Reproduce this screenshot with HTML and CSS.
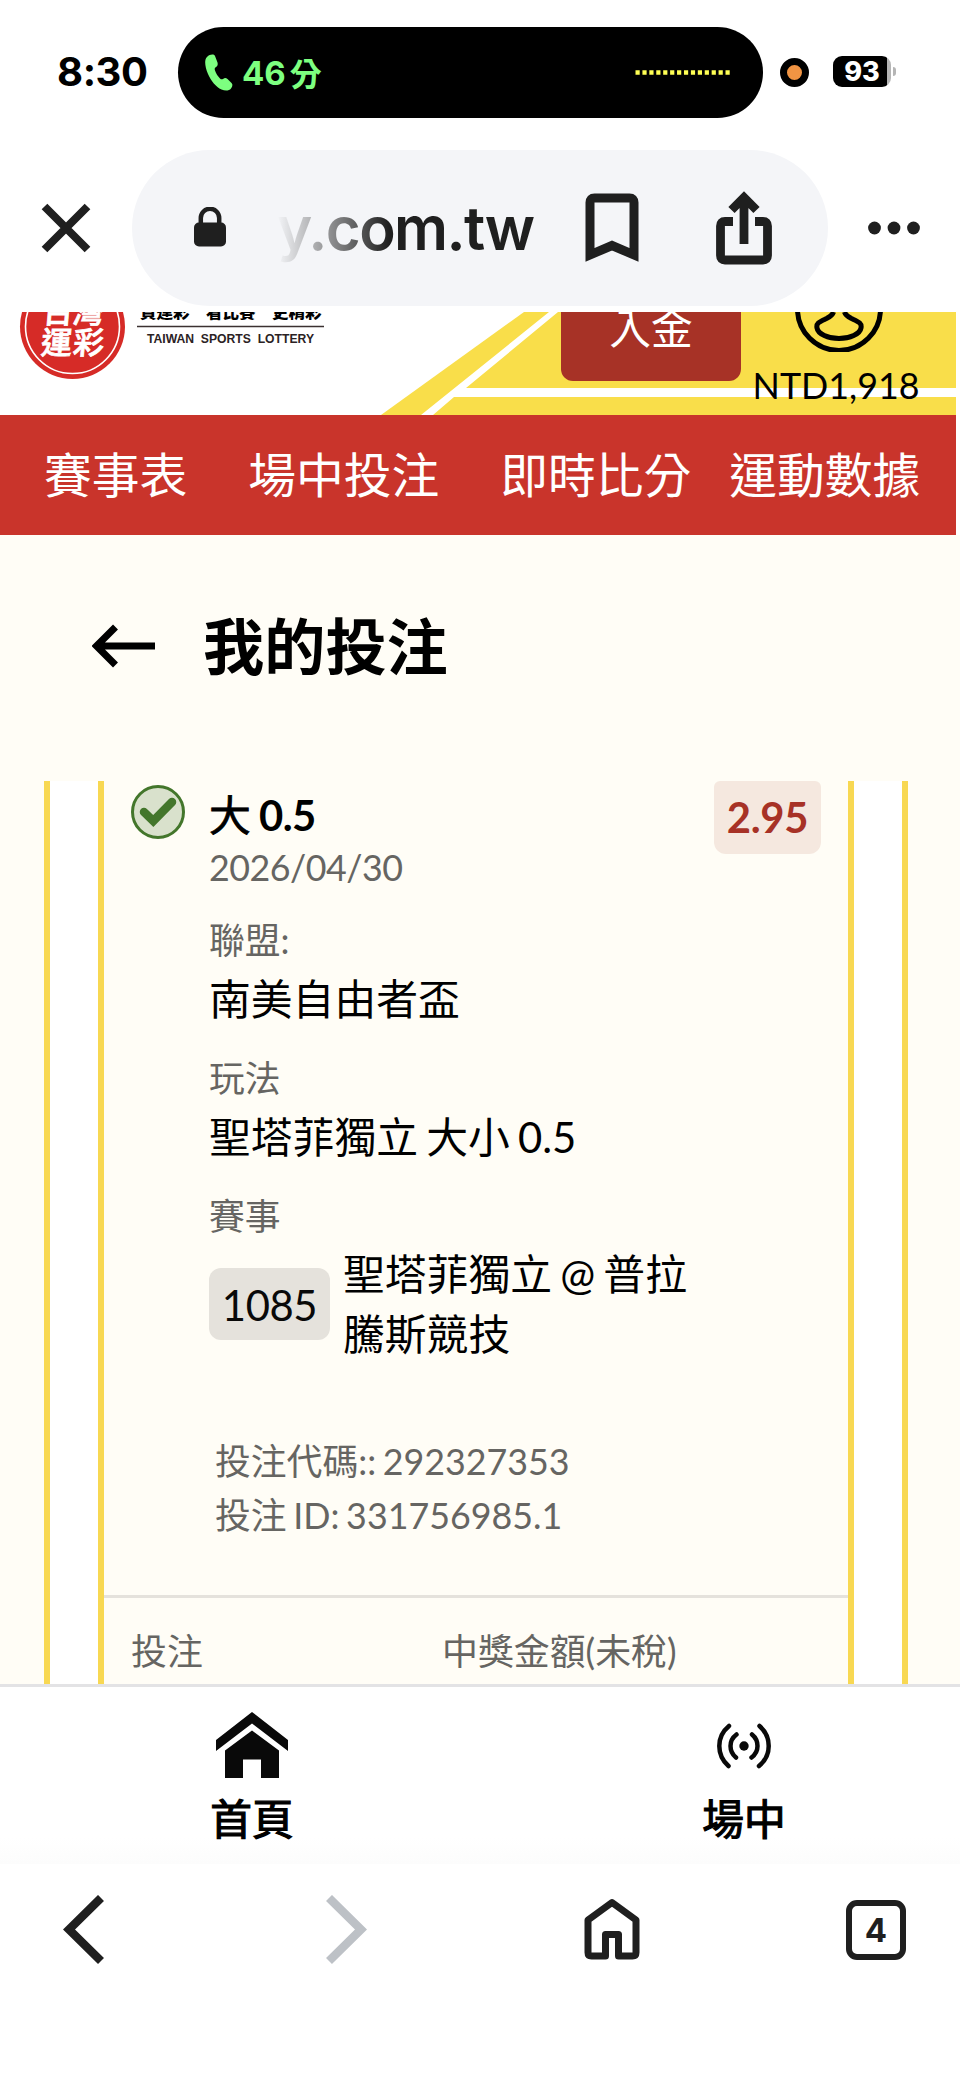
FILE: index.html
```html
<!DOCTYPE html>
<html lang="zh-Hant">
<head>
<meta charset="utf-8">
<title>我的投注</title>
<link rel="stylesheet" href="styles.css">
</head>
<body>
<div class="status">
  <div class="clock">8:30</div>
  <div class="island">
    <svg class="phone" width="28" height="38" viewBox="0 0 28 38"><path d="M2 3C5 0 9 0 10 2L12.500 8.500C13 10.500 12.500 12 11 13C9.500 14 9.500 15 10 16.500C11 19.500 13 22.500 15 24.500C16 25.500 17 25.500 18 25C20 23.500 21 24 22.500 25L26.500 29C28 30.500 27.500 32.500 26 34.500C24 37 20 37 16.500 35.500C11 33 6 27 3 20C0 13 -1 6 2 3Z" fill="#7dff80"/></svg>
    <div class="call-time"><span class="call-number">46</span><span class="call-unit">分</span></div>
    <svg class="wave" width="96" height="5" viewBox="0 0 96 5"><path d="M0.500 2.500H96" stroke="#ffff54" stroke-width="4.500" stroke-dasharray="4.200 2.723"/></svg>
  </div>
  <div class="recording"></div>
  <div class="battery"><span class="battery-level">93</span><span class="battery-nub"></span></div>
</div>

<div class="address-bar">
  <svg class="close" width="50" height="50" viewBox="0 0 50 50"><path d="M3.500 3.500L46.500 46.500M46.500 3.500L3.500 46.500" stroke="#1f1f1f" stroke-width="8"/></svg>
  <div class="address">
    <svg class="lock" width="32" height="40" viewBox="0 0 32 40"><rect y="15.500" width="32" height="24" rx="5" fill="#1f1f1f"/><path d="M6.800 18V11a9.200 9.200 0 0 1 18.400 0V18" fill="none" stroke="#1f1f1f" stroke-width="4.500"/></svg>
    <div class="host">y.com.tw</div>
    <svg class="bookmark" width="54" height="70" viewBox="0 0 54 70"><path d="M5 62V9.500Q5 5 9.500 5H44.500Q49 5 49 9.500V62L27 52.500Z" fill="none" stroke="#1f1f1f" stroke-width="9"/></svg>
    <svg class="share" width="56" height="74" viewBox="0 0 56 74"><path d="M17 30.500H9Q4.500 30.500 4.500 35V64.500Q4.500 69 9 69H47Q51.500 69 51.500 64.500V35Q51.500 30.500 47 30.500H39M28 53V8M15.500 19L28 6.500L40.500 19" fill="none" stroke="#1f1f1f" stroke-width="8.800"/></svg>
  </div>
  <svg class="more" width="52" height="14" viewBox="0 0 52 14"><g fill="#1f1f1f"><circle cx="6.500" cy="7" r="6.400"/><circle cx="26" cy="7" r="6.400"/><circle cx="45.500" cy="7" r="6.400"/></g></svg>
</div>

<header class="site-header">
  <svg class="header-stripes" width="956" height="103" viewBox="0 0 956 103"><path d="M524 0H956V103H381Z" fill="#f9de4a"/><path d="M549 0H558L466 76H956V85H454L433 103H421Z" fill="#fff"/></svg>
  <svg class="logo" width="330" height="70" viewBox="0 0 330 70">
    <circle cx="72.500" cy="14.500" r="52.500" fill="#d62b27"/>
    <circle cx="72.500" cy="14.500" r="47" fill="none" stroke="#fff" stroke-width="1.600"/>
    <g class="logo-mark" transform="skewX(-5)"><text x="43" y="10.500" textLength="61">台灣</text><text x="44" y="42" textLength="63">運彩</text></g>
    <g class="logo-slogan"><text x="140" y="6">買運彩</text><text x="206" y="6">看比賽</text><text x="272" y="6">更精彩</text></g>
    <path d="M137 14.500H324" stroke="#3b3131" stroke-width="1.300"/>
    <text class="logo-english" x="147" y="31" textLength="167" lengthAdjust="spacingAndGlyphs">TAIWAN&#160; SPORTS&#160; LOTTERY</text>
  </svg>
  <div class="deposit">入金</div>
  <div class="account">
    <svg class="avatar" width="90" height="40" viewBox="0 0 90 40"><g fill="none" stroke="#000" stroke-width="5"><circle cx="45" cy="-3" r="41.500"/><path d="M39.500 0Q38.500 3.500 32.500 6.500C25 10 22 11 23 16C24 22 34 26.500 45 26.500S66 22 67 16C68 11 65 10 57.500 6.500Q51.500 3.500 50.500 0"/></g></svg>
    <span class="balance">NTD1,918</span>
  </div>
</header>

<nav class="main-nav"><a>賽事表</a><a>場中投注</a><a>即時比分</a><a>運動數據</a></nav>

<main class="page">
  <div class="page-title">
    <svg width="64" height="44" viewBox="0 0 64 44"><path d="M63 22H5M23.500 3L4.500 22L23.500 41" fill="none" stroke="#000" stroke-width="7"/></svg>
    <h1>我的投注</h1>
  </div>
  <section class="card">
    <article class="bet">
      <div class="bet-body">
        <svg class="won" width="54" height="54" viewBox="0 0 54 54"><circle cx="27" cy="27" r="25.500" fill="#d9e1cc" stroke="#43762b" stroke-width="3"/><path d="M13 27L22.300 36L41 17" fill="none" stroke="#43762b" stroke-width="8.500" stroke-linecap="round"/></svg>
        <div class="details">
          <div class="pick"><span class="pick-side">大</span> <b>0.5</b></div>
          <div class="date">2026/04/30</div>
          <div class="label">聯盟:</div>
          <div class="value">南美自由者盃</div>
          <div class="label">玩法</div>
          <div class="value">聖塔菲獨立 大小 0.5</div>
          <div class="label">賽事</div>
          <div class="match"><span class="match-code">1085</span><span class="teams">聖塔菲獨立 @ 普拉<br>騰斯競技</span></div>
          <div class="reference"><div>投注代碼:: 292327353</div><div>投注 ID: 331756985.1</div></div>
        </div>
        <div class="odds">2.95</div>
      </div>
      <div class="totals"><span>投注</span><span>中獎金額(未稅)</span></div>
    </article>
  </section>
</main>

<nav class="tab-bar">
  <a class="tab tab-home">
    <svg width="72" height="66" viewBox="0 0 72 66"><path d="M36 0L72 28V39L36 11.500L0 39V28ZM36 18.500L63 38.500V66H45V47.500H27V66H9V38.500Z" fill="#090909"/></svg>
    <span>首頁</span>
  </a>
  <a class="tab tab-live">
    <svg width="72" height="66" viewBox="0 0 72 66"><circle cx="36" cy="34" r="4.700" fill="#090909"/><path d="M21 14Q11.300 22 11.300 34T20.500 54M51.500 14Q60.700 22 60.700 34T51 54M28.500 22.500Q22.500 27 22.500 34T28 45.500M44 22.500Q49.500 27 49.500 34T43.500 45.500" fill="none" stroke="#090909" stroke-width="4.500" stroke-linecap="round"/></svg>
    <span>場中</span>
  </a>
</nav>

<footer class="browser-bar">
  <svg class="back" width="42" height="70" viewBox="0 0 42 70"><path d="M38 3L6 34.500L38 66" fill="none" stroke="#1f1f1f" stroke-width="8.500"/></svg>
  <svg class="forward" width="42" height="70" viewBox="0 0 42 70"><path d="M4 3L36 34.500L4 66" fill="none" stroke="#bdc1c6" stroke-width="8.500"/></svg>
  <svg class="home" width="56" height="62" viewBox="0 0 56 62"><path d="M4 22L28 4.500L52 22V54.500Q52 58 48.500 58H34.500V36.500H21.500V58H7.500Q4 58 4 54.500Z" fill="none" stroke="#1f1f1f" stroke-width="7" stroke-linejoin="round"/></svg>
  <div class="tab-count">4</div>
</footer>
</body>
</html>
```
FILE: styles.css
```css
* { box-sizing: border-box; }
body { margin: 0; width: 960px; height: 2079px; overflow: hidden; background: #fff; font-family: Lato, "Noto Sans CJK TC", sans-serif; color: #000; display: flex; flex-direction: column; }
svg { display: block; flex: none; }

.status { height: 150px; flex: none; display: flex; align-items: flex-start; font-family: Inter, "Noto Sans CJK TC", sans-serif; }
.clock { width: 121px; margin: 47px 0 0 57px; font-size: 40px; line-height: 50px; font-weight: 750; letter-spacing: -0.4px; }
.island { width: 585px; height: 91px; margin-top: 27px; border-radius: 45.500px; background: #000; display: flex; align-items: center; padding: 0 32px 0 27px; color: #7dff80; }
.call-time { margin-left: 9px; display: flex; align-items: center; gap: 4px; font-size: 33px; font-weight: 700; }
.call-unit { font-size: 32px; margin-top: -2px; }
.wave { margin-left: auto; }
.recording { width: 29px; height: 29px; margin: 58px 0 0 17px; border: 7.5px solid #000; border-radius: 50%; background: #f19443; }
.battery { display: flex; align-items: center; gap: 2px; margin: 56px 0 0 24px; }
.battery-level { width: 58px; height: 31px; border-radius: 9px; background: linear-gradient(90deg, #000 54px, #b5b5b5 54px); color: #fff; font-size: 27px; line-height: 31px; font-weight: 800; text-align: center; }
.battery-nub { width: 3px; height: 9px; border-radius: 0 4px 4px 0; background: #b5b5b5; }

.address-bar { height: 162px; flex: none; display: flex; align-items: flex-start; }
.close { margin: 53px 41px 0 41px; }
.address { width: 696px; height: 156px; border-radius: 78px; background: #f4f5f8; display: flex; align-items: center; padding: 0 56px 0 62px; }
.lock { margin-top: -2px; }
.host { width: 268px; flex: none; margin-left: 51px; font: 600 60px/80px Inter, sans-serif; letter-spacing: -1.6px; white-space: nowrap; color: transparent; background: linear-gradient(90deg, #f4f5f8 0, #1f1f1f 112px); background-clip: text; }
.bookmark { margin-left: 40px; }
.share { margin-left: auto; }
.more { margin: 71px 0 0 40px; }

.site-header { position: relative; height: 103px; flex: none; overflow: hidden; display: flex; align-items: flex-start; }
.header-stripes { position: absolute; left: 0; top: 0; }
.logo { position: relative; }
.logo-mark { font: 500 31px "Noto Sans CJK TC", sans-serif; fill: #fff; stroke: #fff; stroke-width: 0.800px; }
.logo-slogan { font: 900 16.5px "Noto Sans CJK TC", sans-serif; }
.logo-english { font: 700 13px "Liberation Sans", sans-serif; fill: #2b2224; }
.deposit { position: relative; width: 180px; height: 69px; margin-left: 231px; border-radius: 0 0 12px 12px; background: #a73226; color: #fff; font-size: 41.700px; line-height: 32px; text-align: center; }
.account { position: relative; width: 190px; display: flex; flex-direction: column; align-items: center; }
.avatar { margin-left: 5px; }
.balance { font-size: 35.800px; line-height: 44px; margin-top: 12px; }

.main-nav { width: 956px; height: 120px; flex: none; background: #c9342b; display: flex; justify-content: flex-start; color: #fff; font-size: 47.75px; line-height: 119px; padding-left: 44px; }
.main-nav a:nth-child(2) { margin-left: 61px; }
.main-nav a:nth-child(3) { margin-left: 61px; }
.main-nav a:nth-child(4) { margin-left: 38px; }

.page { height: 1149px; flex: none; overflow: hidden; background: #fffdf6; }
.page-title { height: 246px; display: flex; align-items: flex-start; padding: 68px 0 0 92px; }
.page-title svg { margin-top: 21px; }
.page-title h1 { margin: -1px 0 0 47px; font-size: 61.200px; line-height: 90px; font-weight: 700; }
.card { height: 903px; margin: 0 52px 0 44px; padding: 0 48px; border: solid #f8d852; border-width: 0 6px; background: #fff; }
.bet { height: 903px; border: solid #f8d852; border-width: 0 6px; background: #fffdf6; }
.bet-body { height: 814px; display: flex; align-items: flex-start; padding: 0 27px; }
.won { margin-top: 4px; }
.details { flex: 1; margin-left: 24px; word-spacing: -2.500px; }
.pick, .value, .teams { font-size: 41.800px; line-height: 60px; }
.pick { margin-top: 4px; }
.pick b { letter-spacing: -0.600px; }
.pick-side { -webkit-text-stroke: 0.800px #000; }
.date, .label, .reference { font-size: 35.800px; line-height: 54px; color: #666562; }
.date { margin: -4px 0 0; letter-spacing: -0.500px; }
.label { margin-top: 23px; }
.date + .label { margin-top: 19px; }
.value { margin-top: 1px; }
.match { display: flex; align-items: center; gap: 13px; margin-top: 0; }
.match-code { width: 121px; height: 72px; border-radius: 12px; background: #e5e2dc; color: #090909; font-size: 41.800px; line-height: 74px; letter-spacing: -0.400px; text-align: center; }
.teams { white-space: nowrap; }
.reference { margin: 71px 0 0 6px; }
.odds { width: 107px; height: 73px; border-radius: 6px 6px 12px 12px; background: #f5e8df; color: #a73226; font-size: 41.800px; line-height: 73px; font-weight: 700; letter-spacing: -0.300px; text-align: center; }
.totals { border-top: 3px solid #e5e2dc; display: flex; padding: 27px 27px 0; font-size: 35.900px; line-height: 54px; color: #666562; }
.totals span:first-child { width: 311px; }

.tab-bar { height: 180px; flex: none; border-top: 3px solid #e3e3e5; background: linear-gradient(#fff 85%, #fcfcfc); display: grid; grid-template-columns: 504px 480px; }
.tab { display: flex; flex-direction: column; align-items: center; padding-top: 25px; font-size: 41.700px; line-height: 60px; -webkit-text-stroke: 1.200px #000; }
.tab span { margin-top: 11px; }

.browser-bar { height: 215px; flex: none; display: flex; align-items: flex-start; }
.back { margin: 31px 0 0 63px; }
.forward { margin: 31px 0 0 220px; }
.home { margin: 34px 0 0 217px; }
.tab-count { width: 60px; height: 60px; margin: 36px 0 0 206px; border: 6px solid #1f1f1f; border-radius: 11px; font: 700 33px/48px Inter, sans-serif; text-align: center; color: #1f1f1f; }
```
